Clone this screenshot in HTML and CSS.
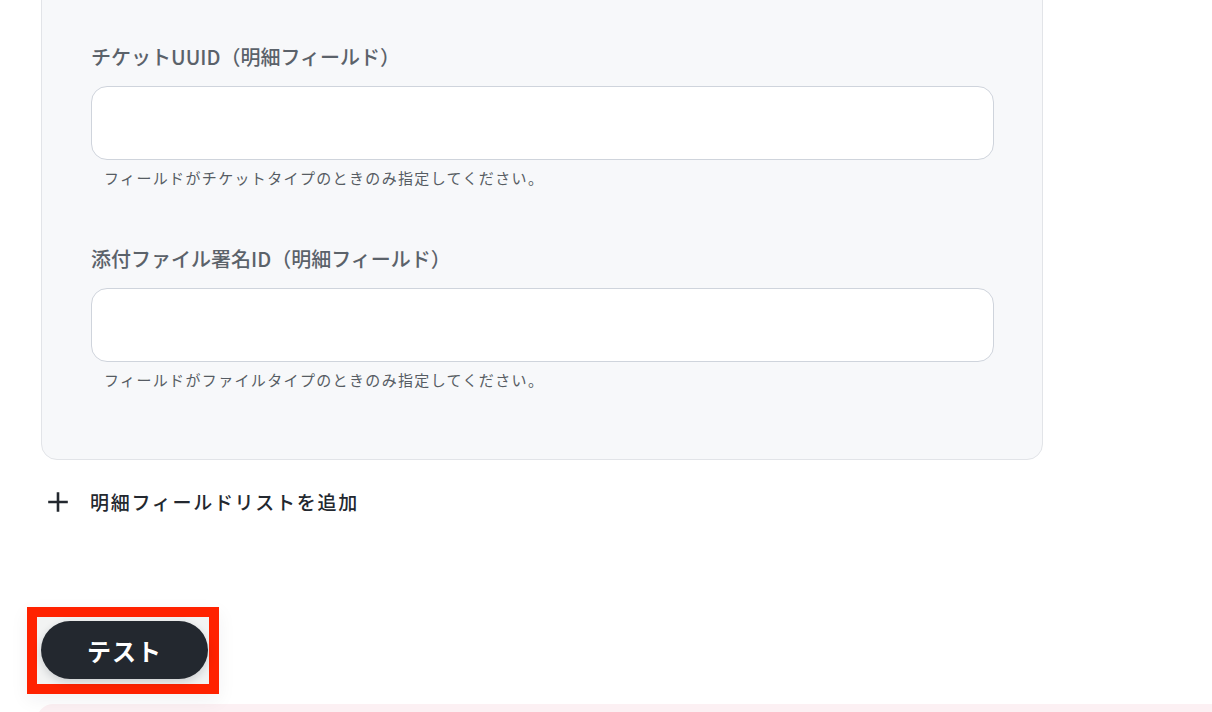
FILE: index.html
```html
<!DOCTYPE html>
<html lang="ja">
<head>
<meta charset="utf-8">
<title>明細フィールド</title>
<link rel="stylesheet" href="styles.css">
</head>
<body>
<main class="page">
  <section class="card">
    <div class="field">
      <label class="field-label">チケットUUID（明細フィールド）</label>
      <input class="field-input" type="text">
      <p class="field-help">フィールドがチケットタイプのときのみ指定してください。</p>
    </div>
    <div class="field">
      <label class="field-label">添付ファイル署名ID（明細フィールド）</label>
      <input class="field-input" type="text">
      <p class="field-help">フィールドがファイルタイプのときのみ指定してください。</p>
    </div>
  </section>

  <button class="add-row" type="button">
    <svg class="add-icon" viewBox="0 0 20 20" width="20" height="20" aria-hidden="true">
      <path d="M10 1.5V18.5M1.5 10H18.5" stroke="#23282f" stroke-width="2.6" stroke-linecap="square" fill="none"/>
    </svg>
    <span>明細フィールドリストを追加</span>
  </button>

  <div class="test-wrap">
    <div class="highlight">
      <button class="test-btn" type="button">テスト</button>
    </div>
  </div>

  <div class="result-panel"></div>
</main>
</body>
</html>
```

FILE: styles.css
```css
* { box-sizing: border-box; }

html, body {
  margin: 0;
  padding: 0;
  background: #ffffff;
  overflow: hidden;
}

body {
  font-family: "Noto Sans CJK JP", "Noto Sans", sans-serif;
  color: #23282f;
}

.page {
  width: 1212px;
  height: 712px;
  overflow: hidden;
}

.card {
  margin: -25px 0 0 41px;
  width: 1002px;
  padding: 66px 49px 69px 49px;
  background: #f7f8fa;
  border: 1px solid #e2e4e8;
  border-radius: 16px;
  display: flex;
  flex-direction: column;
  gap: 56px;
}

.field {
  display: flex;
  flex-direction: column;
}

.field-label {
  font-size: 20px;
  line-height: 30px;
  font-weight: 500;
  color: #5b626a;
}

.field-input {
  margin-top: 14px;
  width: 903px;
  height: 74px;
  background: #ffffff;
  border: 1px solid #cfd4dc;
  border-radius: 16px;
  font: inherit;
  padding: 0 16px;
  outline: none;
}

.field-help {
  margin: 8px 0 0 13px;
  font-size: 15px;
  line-height: 20px;
  letter-spacing: 0.09em;
  color: #565c63;
}

.add-row {
  margin: 27px 0 0 48px;
  display: flex;
  align-items: center;
  gap: 22px;
  background: none;
  border: 0;
  padding: 0;
  font-family: inherit;
  font-size: 19px;
  line-height: 30px;
  font-weight: 500;
  color: #23282f;
  letter-spacing: 0.09em;
}

.add-icon { display: block; }

.test-wrap {
  margin: 90px 0 0 27px;
}

.highlight {
  display: inline-block;
  border: 10px solid #ff2200;
  background: #f2f3f3;
  padding: 4px 1px 5px 4px;
  box-shadow: 0 6px 18px rgba(30, 40, 50, 0.06);
}

.test-btn {
  display: block;
  width: 167px;
  height: 58px;
  border: 0;
  border-radius: 29px;
  background: #23282f;
  color: #ffffff;
  font-family: inherit;
  font-size: 24px;
  font-weight: 700;
  letter-spacing: 0.04em;
  box-shadow: 0 3px 8px rgba(30, 40, 50, 0.18);
}

.result-panel {
  margin: 10px 0 0 37px;
  height: 40px;
  background: #fcf0f3;
  border-radius: 16px 0 0 0;
}
```
